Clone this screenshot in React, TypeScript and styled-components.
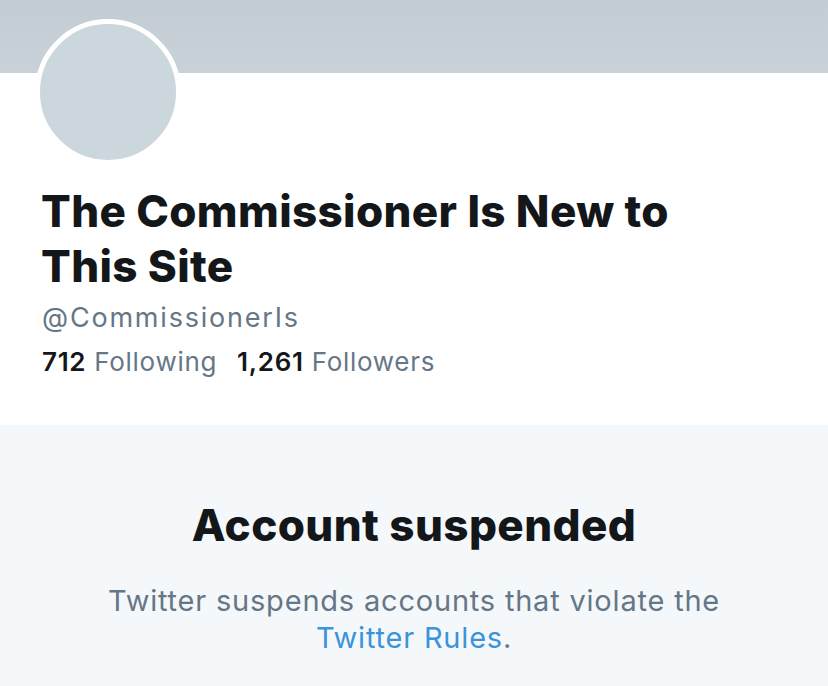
import React from 'react';
import styled, { createGlobalStyle } from 'styled-components';

const GlobalStyle = createGlobalStyle`
  html, body {
    margin: 0;
    padding: 0;
    background: #ffffff;
  }
  body {
    font-family: Inter, "Noto Sans", "Liberation Sans", sans-serif;
    -webkit-font-smoothing: antialiased;
  }
`;

const Page = styled.div`
  width: 828px;
  height: 686px;
  overflow: hidden;
  display: flex;
  flex-direction: column;
  background: #ffffff;
`;

const Banner = styled.div`
  height: 73px;
  flex-shrink: 0;
  background: linear-gradient(180deg, #c3cbd3 0%, #cad2d9 100%);
`;

const Profile = styled.section`
  padding: 0 0 0 35px;
  height: 352px;
  box-sizing: border-box;
`;

const Avatar = styled.div`
  width: 136px;
  height: 136px;
  margin-top: -54px;
  border-radius: 50%;
  border: 5px solid #ffffff;
  background: #ccd6dd;
`;

const Name = styled.h1`
  margin: 19px 0 0 6px;
  font-size: 44px;
  line-height: 55px;
  font-weight: 800;
  letter-spacing: 0.35px;
  color: #14171a;
  max-width: 700px;
`;

const Handle = styled.div`
  margin: 2px 0 0 7px;
  font-size: 27px;
  line-height: 44px;
  letter-spacing: 1.8px;
  color: #657786;
`;

const Stats = styled.div`
  margin: 0 0 0 7px;
  display: flex;
  gap: 20px;
  font-size: 26px;
  line-height: 44px;
  letter-spacing: 0.7px;
  color: #657786;
`;

const Stat = styled.span`
  b {
    font-weight: 600;
    color: #14171a;
    margin-right: 8px;
  }
`;

const Notice = styled.section`
  flex: 1;
  background: #f5f8fa;
  display: flex;
  flex-direction: column;
  align-items: center;
  padding-top: 72px;
`;

const NoticeTitle = styled.h2`
  margin: 0;
  font-size: 44px;
  line-height: 56px;
  font-weight: 800;
  letter-spacing: 0.4px;
  color: #14171a;
`;

const NoticeText = styled.p`
  margin: 29px 0 0;
  width: 680px;
  text-align: center;
  font-size: 29px;
  line-height: 37px;
  letter-spacing: 0.8px;
  color: #657786;
`;

const RulesLink = styled.a`
  color: #3b94d9;
  text-decoration: none;
`;

const App: React.FC = () => {
  return (
    <Page>
      <GlobalStyle />
      <Banner />
      <Profile>
        <Avatar />
        <Name>The Commissioner Is New to This Site</Name>
        <Handle>@CommissionerIs</Handle>
        <Stats>
          <Stat>
            <b>712</b>Following
          </Stat>
          <Stat>
            <b>1,261</b>Followers
          </Stat>
        </Stats>
      </Profile>
      <Notice>
        <NoticeTitle>Account suspended</NoticeTitle>
        <NoticeText>
          Twitter suspends accounts that violate the{' '}
          <RulesLink href="#">Twitter Rules</RulesLink>.
        </NoticeText>
      </Notice>
    </Page>
  );
};

export default App;
